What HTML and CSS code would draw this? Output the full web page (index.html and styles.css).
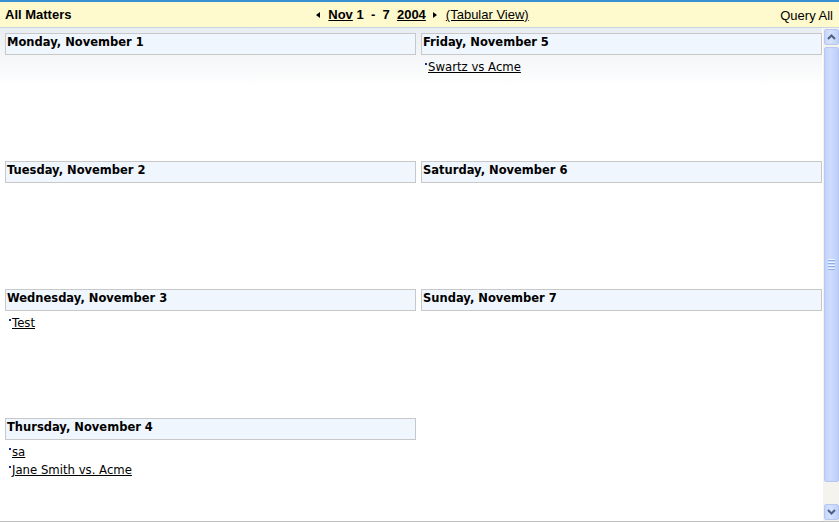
FILE: index.html
```html
<!DOCTYPE html>
<html>
<head>
<meta charset="utf-8">
<link rel="stylesheet" href="styles.css">
</head>
<body>
<div class="app">
  <header class="topbar">
    <div class="title">All Matters</div>
    <div class="nav">
      <span class="arrow arrow-left"></span>
      <span class="navtext"><a href="#" class="u">Nov</a> 1&nbsp; -&nbsp; 7&nbsp; <a href="#" class="u">2004</a></span>
      <span class="arrow arrow-right"></span>
      <a href="#" class="tab">(Tabular View)</a>
    </div>
    <div class="query">Query All</div>
  </header>
  <div class="main">
    <div class="content">
      <div class="week">
        <div class="col col-left">
          <div class="day">
            <div class="dayhead">Monday, November 1</div>
          </div>
          <div class="day">
            <div class="dayhead">Tuesday, November 2</div>
          </div>
          <div class="day">
            <div class="dayhead">Wednesday, November 3</div>
            <ul class="items">
              <li><span class="dot"></span><a href="#">Test</a></li>
            </ul>
          </div>
          <div class="day">
            <div class="dayhead">Thursday, November 4</div>
            <ul class="items">
              <li><span class="dot"></span><a href="#">sa</a></li>
              <li><span class="dot"></span><a href="#">Jane Smith vs. Acme</a></li>
            </ul>
          </div>
        </div>
        <div class="col col-right">
          <div class="day">
            <div class="dayhead">Friday, November 5</div>
            <ul class="items">
              <li><span class="dot"></span><a href="#">Swartz vs Acme</a></li>
            </ul>
          </div>
          <div class="day">
            <div class="dayhead">Saturday, November 6</div>
          </div>
          <div class="day">
            <div class="dayhead">Sunday, November 7</div>
          </div>
        </div>
      </div>
    </div>
    <div class="scrollbar">
      <div class="sb-btn">
        <svg width="9" height="6" viewBox="0 0 9 6"><path d="M1 5 L4.5 1.5 L8 5" fill="none" stroke="#4d6185" stroke-width="2"/></svg>
      </div>
      <div class="sb-thumb">
        <div class="grip"><i></i><i></i><i></i><i></i></div>
      </div>
      <div class="sb-track"></div>
      <div class="sb-btn">
        <svg width="9" height="6" viewBox="0 0 9 6"><path d="M1 1 L4.5 4.5 L8 1" fill="none" stroke="#4d6185" stroke-width="2"/></svg>
      </div>
    </div>
  </div>
</div>
</body>
</html>
```

FILE: styles.css
```css
html, body {
  margin: 0;
  padding: 0;
  background: #fff;
}
.app {
  width: 839px;
  height: 522px;
  display: flex;
  flex-direction: column;
  overflow: hidden;
}
.topbar {
  height: 25px;
  border-top: 2px solid #3b8fd4;
  border-bottom: 1px solid #c9d5e1;
  background: #fffacd;
  display: grid;
  grid-template-columns: 1fr auto 1fr;
  align-items: center;
  font-family: "Liberation Sans", Arial, sans-serif;
  font-size: 13px;
  color: #000;
}
.title {
  font-weight: bold;
  padding-left: 5px;
}
.nav {
  display: flex;
  align-items: center;
  padding-left: 6px;
}
.navtext {
  font-weight: bold;
  margin-left: 8px;
}
.nav a, .topbar a {
  color: #000;
}
.u {
  text-decoration: underline;
}
.arrow {
  width: 0;
  height: 0;
  border-top: 3.5px solid transparent;
  border-bottom: 3.5px solid transparent;
}
.arrow-left {
  border-right: 4px solid #000;
}
.arrow-right {
  border-left: 4px solid #000;
  margin-left: 7px;
}
.tab {
  margin-left: 9px;
  font-size: 13px;
}
.query {
  text-align: right;
  padding-right: 6px;
  padding-top: 2px;
}
.main {
  height: 493px;
  border-bottom: 1px solid #bfbfbf;
  display: flex;
}
.content {
  flex: 1;
  overflow: hidden;
  background: linear-gradient(#e9edf1 0px, #ffffff 58px);
  padding-top: 5px;
  padding-left: 5px;
}
.week {
  display: flex;
  gap: 5px;
}
.col-left {
  width: 411px;
  flex: none;
}
.col-right {
  width: 401px;
  flex: none;
}
.day {
  height: 128px;
}
.day:nth-child(3) {
  height: 129px;
}
.dayhead {
  border: 1px solid #c8c8c8;
  background: #f0f6fd;
  font-family: "DejaVu Sans", Verdana, sans-serif;
  font-weight: bold;
  font-size: 11.5px;
  line-height: 13px;
  padding: 2px 0 0 1px;
  box-sizing: border-box;
  height: 22px;
  color: #000;
}
.items {
  list-style: none;
  margin: 3px 0 0 0;
  padding: 0 0 0 4px;
  font-family: "DejaVu Sans", Verdana, sans-serif;
  font-size: 11.7px;
  line-height: 18px;
}
.items li {
  display: flex;
  align-items: flex-start;
}
.dot {
  width: 2px;
  height: 2px;
  background: #0a2ea8;
  margin-top: 5px;
  margin-right: 1px;
  flex: none;
}
.items a {
  color: #000;
  text-decoration: underline;
}
.scrollbar {
  width: 17px;
  flex: none;
  background: #f4f3ee;
  border-left: 1px solid #fff;
  box-sizing: border-box;
  display: flex;
  flex-direction: column;
  align-items: center;
}
.sb-btn {
  width: 15px;
  height: 16px;
  margin: 1px 0;
  box-sizing: border-box;
  border: 1px solid #b6c8f2;
  border-radius: 2px;
  background: linear-gradient(90deg, #c6d5fc, #d6e2fe 40%, #bfd0fa);
  display: flex;
  align-items: center;
  justify-content: center;
  flex: none;
}
.sb-thumb {
  width: 15px;
  height: 435px;
  margin-top: 1px;
  box-sizing: border-box;
  border: 1px solid #b6c8f2;
  border-radius: 2px;
  background: linear-gradient(90deg, #c2d3fc, #cfdcfe 40%, #bdcefa);
  display: flex;
  align-items: center;
  justify-content: center;
  flex: none;
}
.grip {
  display: flex;
  flex-direction: column;
  gap: 1px;
}
.grip i {
  display: block;
  width: 7px;
  height: 1px;
  background: #eef4fe;
  border-bottom: 1px solid #8cacf0;
}
.sb-track {
  flex: 1;
}
```
